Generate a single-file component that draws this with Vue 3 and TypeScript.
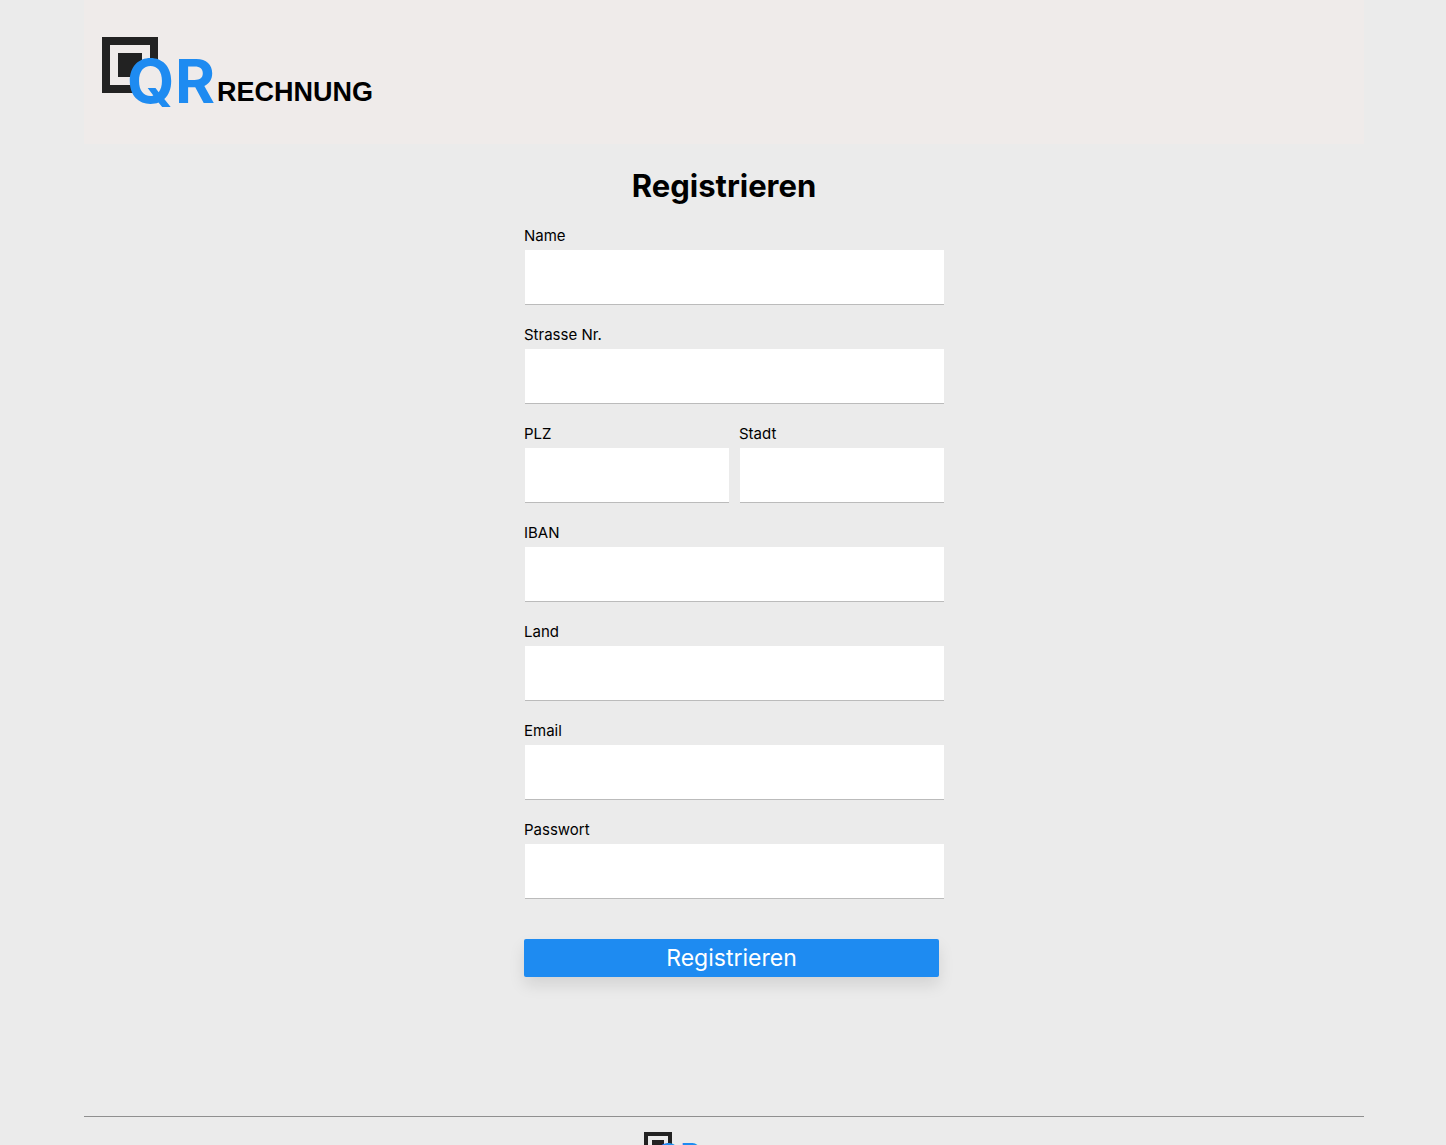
<script setup lang="ts">
import { reactive } from 'vue'

interface Field {
  id: string
  label: string
  type: string
  half?: boolean
}

const fields: Field[] = [
  { id: 'name', label: 'Name', type: 'text' },
  { id: 'street', label: 'Strasse Nr.', type: 'text' },
  { id: 'zip', label: 'PLZ', type: 'text', half: true },
  { id: 'city', label: 'Stadt', type: 'text', half: true },
  { id: 'iban', label: 'IBAN', type: 'text' },
  { id: 'country', label: 'Land', type: 'text' },
  { id: 'email', label: 'Email', type: 'email' },
  { id: 'password', label: 'Passwort', type: 'password' },
]

const values = reactive<Record<string, string>>({})
</script>

<template>
  <div class="page">
    <div class="container">
      <header class="header">
        <svg class="logo" viewBox="0 0 320 80" role="img" aria-label="QR Rechnung">
          <rect x="4" y="4" width="48" height="48" fill="none" stroke="#222" stroke-width="8" />
          <rect x="16" y="16" width="24" height="24" fill="#222" />
          <ellipse class="counter" cx="48" cy="44" rx="17" ry="20" />
          <text class="logo-mark" x="25" y="66" font-size="61" fill="#1e8bf1">Q</text>
          <text class="logo-mark" x="73" y="66" font-size="61" fill="#1e8bf1">R</text>
          <text class="logo-text" x="115" y="64" font-size="27" fill="#000">RECHNUNG</text>
        </svg>
      </header>

      <main>
        <h1>Registrieren</h1>
        <form class="form" @submit.prevent>
          <div v-for="f in fields" :key="f.id" class="field" :class="{ half: f.half }">
            <label :for="f.id">{{ f.label }}</label>
            <input :id="f.id" v-model="values[f.id]" :type="f.type" />
          </div>
          <button type="submit">Registrieren</button>
        </form>
      </main>

      <footer class="footer">
        <svg class="logo small" viewBox="0 0 320 80" role="img" aria-label="QR Rechnung">
          <rect x="4" y="4" width="48" height="48" fill="none" stroke="#222" stroke-width="8" />
          <rect x="16" y="16" width="24" height="24" fill="#222" />
          <ellipse class="counter" cx="48" cy="44" rx="17" ry="20" />
          <text class="logo-mark" x="25" y="66" font-size="61" fill="#1e8bf1">Q</text>
          <text class="logo-mark" x="73" y="66" font-size="61" fill="#1e8bf1">R</text>
          <text class="logo-text" x="115" y="64" font-size="27" fill="#000">RECHNUNG</text>
        </svg>
      </footer>
    </div>
  </div>
</template>

<style>
body {
  background: #ebebeb;
}
</style>

<style scoped>
.page {
  padding-left: 2px;
  font-family: Inter, "Liberation Sans", sans-serif;
  color: #000;
}
.container {
  max-width: 1280px;
  margin: 0 auto;
}
.header {
  padding: 37px 18px 27px;
  background: #efebea;
}
.logo {
  display: block;
  width: 320px;
  height: 80px;
}
.logo.small {
  width: 160px;
  height: 40px;
}
.counter {
  fill: #efebea;
}
.small .counter {
  fill: #ebebeb;
}
.logo-mark {
  font-family: Inter, sans-serif;
  font-weight: 700;
}
.logo-text {
  font-family: "Liberation Sans", Arial, sans-serif;
  font-weight: 700;
}
h1 {
  margin: 22px 0 20px;
  font-size: 31px;
  line-height: 40px;
  font-weight: 700;
  text-align: center;
}
.form {
  display: grid;
  grid-template-columns: repeat(2, minmax(0, 1fr));
  gap: 20px 10px;
  box-sizing: border-box;
  max-width: 440px;
  margin: 0 auto;
  padding-left: 20px;
}
.field {
  grid-column: span 2;
  display: flex;
  flex-direction: column;
  gap: 4px;
}
.field.half {
  grid-column: span 1;
}
label {
  font-size: 15px;
  line-height: 20px;
}
input {
  box-sizing: border-box;
  min-width: 0;
  height: 55px;
  margin: 0 0 0 1px;
  padding: 0 12px;
  border: 0;
  border-bottom: 1px solid #bbb;
  border-radius: 0;
  background: #fff;
  font: inherit;
  font-size: 16px;
}
button {
  grid-column: span 2;
  height: 38px;
  margin: 20px 5px 0 0;
  padding: 0;
  border: 0;
  border-radius: 2px;
  background: #1e8bf1;
  color: #fff;
  font: inherit;
  font-size: 23px;
  box-shadow: 0 8px 16px rgba(0, 0, 0, 0.1);
}
.footer {
  display: flex;
  justify-content: center;
  margin-top: 139px;
  padding: 15px 0 40px;
  border-top: 1px solid #8f8f8f;
}
</style>
